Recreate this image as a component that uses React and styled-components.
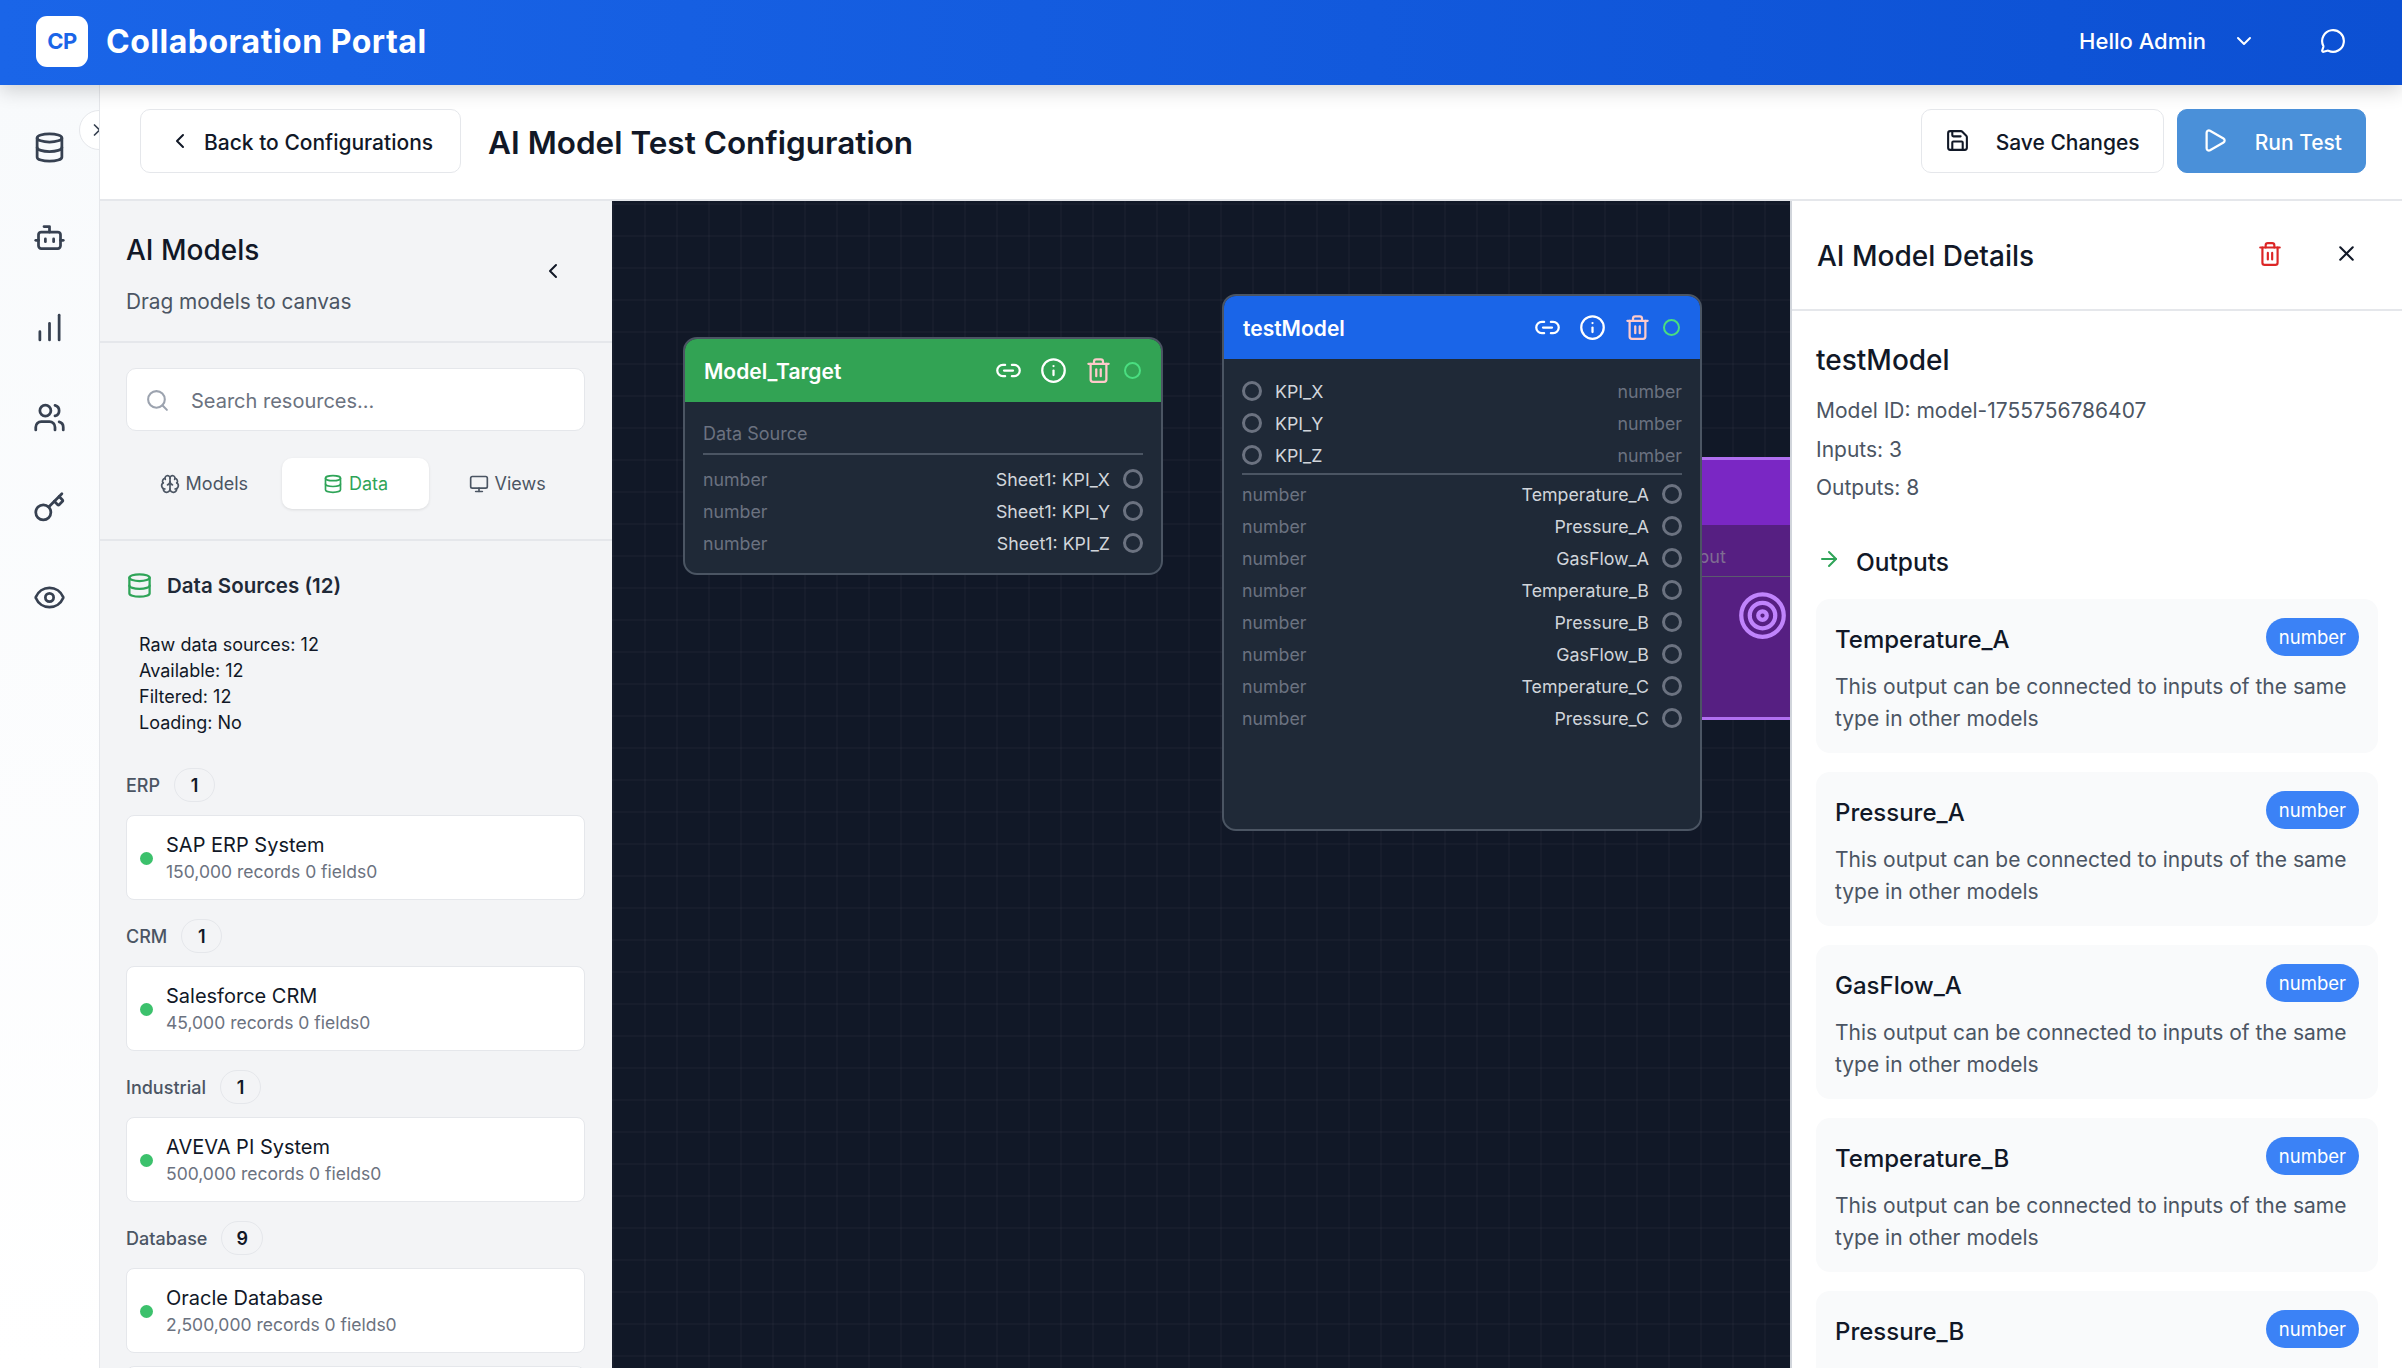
import styled, { createGlobalStyle } from 'styled-components';
import {
    ArrowRight, Bot, ChartNoAxesColumnIncreasing, ChevronDown, ChevronLeft, ChevronRight,
    Brain, Database, Eye, Info, Key, Link2, MessageCircle, Monitor, Play, Save, Search,
    Target, Trash2, Users, X,
} from 'lucide-react';

const GlobalStyle = createGlobalStyle`
    html, body { margin: 0; padding: 0; height: 100%; }
    body { font-family: Inter, "Noto Sans", sans-serif; color: #111827; overflow: hidden; background: #fff; }
    * { box-sizing: border-box; }
`;

const Page = styled.div`
    width: 2402px;
    height: 1368px;
    display: flex;
    flex-direction: column;
    overflow: hidden;
`;

const Header = styled.header`
    height: 85px;
    flex: none;
    display: flex;
    align-items: center;
    padding: 0 56px 3px 36px;
    background: linear-gradient(90deg, #1a65e8 0%, #0c50d3 100%);
    box-shadow: 0 6px 18px rgba(0, 0, 0, 0.16);
    position: relative;
    z-index: 5;
    color: #fff;
`;

const Logo = styled.div`
    width: 52px;
    height: 51px;
    border-radius: 11px;
    background: #fff;
    color: #1a65e8;
    font-size: 22px;
    font-weight: 700;
    display: flex;
    align-items: center;
    justify-content: center;
    letter-spacing: -0.5px;
`;

const Brand = styled.div`
    margin-left: 18px;
    font-size: 32px;
    font-weight: 700;
    letter-spacing: 0.5px;
    flex: 1;
`;

const UserName = styled.span`
    font-size: 22px;
    font-weight: 500;
`;

const HeaderIcon = styled.span`
    display: flex;
    margin-left: ${p => p.$gap}px;
`;

const Body = styled.div`
    flex: 1;
    min-height: 0;
    display: flex;
`;

const Rail = styled.nav`
    width: 100px;
    flex: none;
    position: relative;
    overflow: hidden;
    background: linear-gradient(180deg, #f8fafc 0%, #ffffff 100%);
    border-right: 1px solid #e5e7eb;
    display: flex;
    flex-direction: column;
    align-items: center;
    padding: 46px 0 0 0;
    gap: 57px;
    color: #374151;
`;

const RailToggle = styled.div`
    position: absolute;
    left: 79px;
    top: 25px;
    width: 40px;
    height: 40px;
    border-radius: 50%;
    background: #fff;
    border: 1px solid #e5e7eb;
    display: flex;
    align-items: center;
    padding-left: 7px;
    color: #374151;
`;

const Main = styled.div`
    flex: 1;
    min-width: 0;
    display: flex;
    flex-direction: column;
`;

const TopBar = styled.div`
    height: 116px;
    flex: none;
    background: #fff;
    border-bottom: 2px solid #e5e7eb;
    display: flex;
    align-items: center;
    padding: 0 36px 3px 40px;
`;

const Button = styled.button`
    height: 64px;
    border-radius: 10px;
    border: 1px solid ${p => (p.$primary ? '#4a90d9' : '#e5e7eb')};
    background: ${p => (p.$primary ? '#4a90d9' : '#fff')};
    color: ${p => (p.$primary ? '#fff' : '#111827')};
    font-family: inherit;
    font-size: 21px;
    font-weight: 500;
    display: flex;
    align-items: center;
    gap: ${p => p.$gap}px;
    padding: 0 ${p => p.$pad}px;
    margin-left: ${p => p.$left || 0}px;
`;

const ButtonLabel = styled.span`
    margin-top: 3px;
`;

const PageTitle = styled.h1`
    margin: 3px 0 0 27px;
    font-size: 31.5px;
    font-weight: 600;
    flex: 1;
`;

const Work = styled.div`
    flex: 1;
    min-height: 0;
    display: flex;
`;

const ModelsPanel = styled.aside`
    width: 512px;
    flex: none;
    background: #f3f4f6;
    display: flex;
    flex-direction: column;
    overflow: hidden;
`;

const PanelHead = styled.div`
    height: 142px;
    flex: none;
    border-bottom: 2px solid #e5e7eb;
    padding: 30px 27px 0 26px;
    display: flex;
    justify-content: space-between;
`;

const PanelTitle = styled.h2`
    margin: 0;
    font-size: 28px;
    line-height: 38px;
    font-weight: 500;
`;

const PanelSub = styled.p`
    margin: 19px 0 0;
    font-size: 20.8px;
    line-height: 28px;
    color: #4b5563;
`;

const Collapse = styled.span`
    display: flex;
    align-items: center;
    height: 80px;
    margin-right: 20px;
    color: #111827;
`;

const SearchArea = styled.div`
    height: 198px;
    flex: none;
    border-bottom: 2px solid #e5e7eb;
    padding: 25px 27px 0 26px;
`;

const SearchBox = styled.div`
    height: 63px;
    background: #fff;
    border: 1px solid #e5e7eb;
    border-radius: 10px;
    display: flex;
    align-items: center;
    gap: 21px;
    padding: 2px 0 0 18px;
    font-size: 20px;
    color: #6b7280;
`;

const Tabs = styled.div`
    display: grid;
    grid-template-columns: repeat(3, 1fr);
    gap: 4px;
    margin-top: 27px;
    padding: 0 4px;
`;

const Tab = styled.div`
    height: 51px;
    border-radius: 10px;
    display: flex;
    align-items: center;
    justify-content: center;
    gap: 6px;
    font-size: 18px;
    color: ${p => (p.$active ? '#2fa458' : '#4b5563')};
    background: ${p => (p.$active ? '#fff' : 'transparent')};
    box-shadow: ${p => (p.$active ? '0 1px 3px rgba(0, 0, 0, 0.1)' : 'none')};
`;

const Resources = styled.div`
    padding: 30px 27px 0 26px;
`;

const SourcesHead = styled.div`
    display: flex;
    align-items: center;
    gap: 14px;
    height: 28px;
    color: #2fa458;
`;

const SourcesTitle = styled.h3`
    margin: 0;
    font-size: 20.5px;
    font-weight: 600;
    color: #1f2937;
`;

const Debug = styled.div`
    margin: 33px 0 0 13px;
    font-size: 18px;
    line-height: 26px;
    color: #111827;
`;

const Group = styled.div`
    display: flex;
    align-items: center;
    gap: 14px;
    height: 34px;
    margin-top: ${p => (p.$first ? 32 : 19)}px;
    font-size: 18px;
    font-weight: 500;
    color: #4b5563;
`;

const Count = styled.span`
    min-width: 41px;
    padding: 0 14px;
    height: 34px;
    border-radius: 17px;
    border: 1px solid #e5e7eb;
    display: flex;
    align-items: center;
    justify-content: center;
    font-weight: 600;
    color: #111827;
`;

const SourceCard = styled.div`
    height: 85px;
    margin-top: 13px;
    background: #fff;
    border: 1px solid #e5e7eb;
    border-radius: 8px;
    display: flex;
    align-items: center;
    padding-left: 13px;
    gap: 13px;
`;

const Dot = styled.span`
    width: 13px;
    height: 13px;
    border-radius: 50%;
    background: #3cc16c;
    margin-top: 2px;
`;

const SourceName = styled.div`
    font-size: 20px;
    line-height: 28px;
    color: #111827;
`;

const SourceMeta = styled.div`
    font-size: 17.5px;
    line-height: 26px;
    color: #6b7280;
`;

const Canvas = styled.main`
    flex: 1;
    min-width: 0;
    position: relative;
    overflow: hidden;
    background-color: #111827;
    background-image:
        linear-gradient(rgba(255, 255, 255, 0.025) 2px, transparent 2px),
        linear-gradient(90deg, rgba(255, 255, 255, 0.025) 2px, transparent 2px);
    background-size: 32px 32px;
    background-position: 0 2px;
`;

const Node = styled.section`
    position: absolute;
    left: ${p => p.$x}px;
    top: ${p => p.$y}px;
    width: 480px;
    height: ${p => p.$h}px;
    background: #1f2937;
    border: 2px solid #4b5563;
    border-radius: 14px;
    overflow: hidden;
`;

const NodeHead = styled.div`
    height: 63px;
    background: ${p => p.$color};
    display: flex;
    align-items: center;
    padding: 0 20px 0 19px;
    color: #fff;
`;

const NodeTitle = styled.div`
    flex: 1;
    font-size: 21px;
    font-weight: 600;
    margin-top: 2px;
`;

const NodeIcon = styled.span`
    display: flex;
    justify-content: center;
    width: 30px;
    margin-right: 15px;
    color: ${p => p.$color || '#fff'};
`;

const Status = styled.span`
    width: 17px;
    height: 17px;
    margin-left: -4px;
    border-radius: 50%;
    border: 2px solid #4ade80;
`;

const NodeBody = styled.div`
    padding: ${p => p.$top}px 18px 0;
`;

const NodeCaption = styled.div`
    font-size: 18px;
    line-height: 24px;
    color: #6b7280;
    padding-bottom: 7px;
    border-bottom: 2px solid #4b5563;
    margin-bottom: 8px;
`;

const Port = styled.span`
    width: 20px;
    height: 20px;
    flex: none;
    border-radius: 50%;
    border: 3px solid #6b7280;
`;

const PortRow = styled.div`
    height: 32px;
    display: flex;
    align-items: center;
    font-size: 17.8px;
`;

const PortName = styled.span`
    color: #d1d5db;
    margin: ${p => (p.$right ? '0 13px 0 0' : '0 0 0 13px')};
`;

const PortType = styled.span`
    flex: 1;
    color: #6b7280;
    text-align: ${p => (p.$right ? 'right' : 'left')};
`;

const Divider = styled.div`
    height: 2px;
    background: #4b5563;
    margin: 2px 0 3px;
`;

const PurpleNode = styled.section`
    position: absolute;
    left: 1030px;
    top: 256px;
    width: 400px;
    height: 263px;
    background: #561f82;
    border: 3px solid #b06ff0;
    border-radius: 14px;
    overflow: hidden;
`;

const PurpleHead = styled.div`
    height: 65px;
    background: #7a27c4;
`;

const PurpleCaption = styled.div`
    height: 52px;
    border-bottom: 1px solid #5b5a6e;
    padding: 21px 0 0 23px;
    font-size: 18px;
    line-height: 22px;
    color: #7f6d92;
`;

const PurpleIcon = styled.div`
    position: absolute;
    left: 92px;
    top: 130px;
    color: #c084fc;
    display: flex;
`;

const DetailsPanel = styled.aside`
    width: 612px;
    flex: none;
    background: #fff;
    border-left: 2px solid #d1d5db;
    overflow: hidden;
`;

const DetailsHead = styled.div`
    height: 110px;
    border-bottom: 2px solid #e5e7eb;
    display: flex;
    align-items: center;
    padding: 0 43px 0 25px;
`;

const DetailsTitle = styled.h2`
    margin: 2px 0 0;
    flex: 1;
    font-size: 28px;
    font-weight: 500;
`;

const DetailsIcon = styled.span`
    display: flex;
    margin-left: ${p => p.$left || 0}px;
    color: ${p => p.$color};
    margin-top: -3px;
`;

const DetailsBody = styled.div`
    padding: 30px 24px 0;
`;

const ModelName = styled.h3`
    margin: 0;
    font-size: 28px;
    line-height: 38px;
    font-weight: 500;
`;

const Fact = styled.p`
    margin: 0;
    font-size: 21px;
    line-height: 38.5px;
    color: #4b5563;
    &:first-of-type { margin-top: 13px; }
`;

const OutputsHead = styled.div`
    display: flex;
    align-items: center;
    gap: 15px;
    margin: 37px 0 22px;
    height: 32px;
    padding-left: 1px;
    color: #2fa458;
`;

const OutputsArrow = styled.span`
    display: flex;
    margin-top: -3px;
`;

const OutputsTitle = styled.h4`
    margin: 2px 0 0;
    font-size: 24.5px;
    font-weight: 500;
    color: #111827;
`;

const OutputCard = styled.div`
    height: 154px;
    margin-bottom: 19px;
    background: #f9fafb;
    border-radius: 14px;
    padding: 19px 19px 0;
`;

const OutputTop = styled.div`
    display: flex;
    justify-content: space-between;
`;

const OutputName = styled.div`
    font-size: 24px;
    line-height: 42px;
    font-weight: 500;
    margin-top: 1px;
`;

const Badge = styled.span`
    height: 38px;
    padding: 0 13px;
    border-radius: 19px;
    background: #3b82f6;
    color: #fff;
    font-size: 18.5px;
    display: flex;
    align-items: center;
`;

const OutputText = styled.p`
    margin: 10px 0 0;
    font-size: 21px;
    line-height: 32px;
    color: #4b5563;
`;

const RAIL = [Database, Bot, ChartNoAxesColumnIncreasing, Users, Key, Eye];

const SOURCES = [
    { group: 'ERP', count: 1, name: 'SAP ERP System', records: '150,000' },
    { group: 'CRM', count: 1, name: 'Salesforce CRM', records: '45,000' },
    { group: 'Industrial', count: 1, name: 'AVEVA PI System', records: '500,000' },
    { group: 'Database', count: 9, name: 'Oracle Database', records: '2,500,000' },
];

const INPUTS = ['KPI_X', 'KPI_Y', 'KPI_Z'];
const OUTPUTS = ['Temperature_A', 'Pressure_A', 'GasFlow_A', 'Temperature_B', 'Pressure_B', 'GasFlow_B', 'Temperature_C', 'Pressure_C'];

function NodeHeader({ title, color }) {
    return (
        <NodeHead $color={color}>
            <NodeTitle>{title}</NodeTitle>
            <NodeIcon><Link2 size={27} strokeWidth={2} /></NodeIcon>
            <NodeIcon><Info size={27} strokeWidth={2} /></NodeIcon>
            <NodeIcon $color="#fecaca"><Trash2 size={27} strokeWidth={2} /></NodeIcon>
            <Status />
        </NodeHead>
    );
}

function OutputPort({ name }) {
    return (
        <PortRow>
            <PortType>number</PortType>
            <PortName $right>{name}</PortName>
            <Port />
        </PortRow>
    );
}

function App() {
    return (
        <Page>
            <GlobalStyle />
            <Header>
                <Logo>CP</Logo>
                <Brand>Collaboration Portal</Brand>
                <UserName>Hello Admin</UserName>
                <HeaderIcon $gap={26}><ChevronDown size={24} /></HeaderIcon>
                <HeaderIcon $gap={64}><MessageCircle size={26} /></HeaderIcon>
            </Header>
            <Body>
                <Rail>
                    <RailToggle><ChevronRight size={20} /></RailToggle>
                    {RAIL.map((Icon, index) => <Icon key={index} size={33} strokeWidth={2} />)}
                </Rail>
                <Main>
                    <TopBar>
                        <Button $gap={12} $pad={27}><ChevronLeft size={24} /><ButtonLabel>Back to Configurations</ButtonLabel></Button>
                        <PageTitle>AI Model Test Configuration</PageTitle>
                        <Button $gap={26} $pad={23}><Save size={25} /><ButtonLabel>Save Changes</ButtonLabel></Button>
                        <Button $primary $gap={27} $pad={23} $left={13}><Play size={27} /><ButtonLabel>Run Test</ButtonLabel></Button>
                    </TopBar>
                    <Work>
                        <ModelsPanel>
                            <PanelHead>
                                <div>
                                    <PanelTitle>AI Models</PanelTitle>
                                    <PanelSub>Drag models to canvas</PanelSub>
                                </div>
                                <Collapse><ChevronLeft size={24} /></Collapse>
                            </PanelHead>
                            <SearchArea>
                                <SearchBox><Search size={25} color="#9ca3af" />Search resources...</SearchBox>
                                <Tabs>
                                    <Tab><Brain size={20} />Models</Tab>
                                    <Tab $active><Database size={20} />Data</Tab>
                                    <Tab><Monitor size={20} />Views</Tab>
                                </Tabs>
                            </SearchArea>
                            <Resources>
                                <SourcesHead>
                                    <Database size={27} />
                                    <SourcesTitle>Data Sources (12)</SourcesTitle>
                                </SourcesHead>
                                <Debug>
                                    <div>Raw data sources: 12</div>
                                    <div>Available: 12</div>
                                    <div>Filtered: 12</div>
                                    <div>Loading: No</div>
                                </Debug>
                                {SOURCES.map((source, index) => (
                                    <div key={source.name}>
                                        <Group $first={index === 0}>
                                            {source.group}
                                            <Count>{source.count}</Count>
                                        </Group>
                                        <SourceCard>
                                            <Dot />
                                            <div>
                                                <SourceName>{source.name}</SourceName>
                                                <SourceMeta>{source.records} records 0 fields0</SourceMeta>
                                            </div>
                                        </SourceCard>
                                    </div>
                                ))}
                                <SourceCard />
                            </Resources>
                        </ModelsPanel>
                        <Canvas>
                            <PurpleNode>
                                <PurpleHead />
                                <PurpleCaption>Output</PurpleCaption>
                                <PurpleIcon><Target size={51} strokeWidth={2} /></PurpleIcon>
                            </PurpleNode>
                            <Node $x={71} $y={136} $h={238}>
                                <NodeHeader title="Model_Target" color="#32a354" />
                                <NodeBody $top={20}>
                                    <NodeCaption>Data Source</NodeCaption>
                                    {INPUTS.map(kpi => <OutputPort key={kpi} name={`Sheet1: ${kpi}`} />)}
                                </NodeBody>
                            </Node>
                            <Node $x={610} $y={93} $h={537}>
                                <NodeHeader title="testModel" color="#1a65e8" />
                                <NodeBody $top={16}>
                                    {INPUTS.map(name => (
                                        <PortRow key={name}>
                                            <Port />
                                            <PortName>{name}</PortName>
                                            <PortType $right>number</PortType>
                                        </PortRow>
                                    ))}
                                    <Divider />
                                    {OUTPUTS.map(name => <OutputPort key={name} name={name} />)}
                                </NodeBody>
                            </Node>
                        </Canvas>
                        <DetailsPanel>
                            <DetailsHead>
                                <DetailsTitle>AI Model Details</DetailsTitle>
                                <DetailsIcon $color="#dc2626"><Trash2 size={26} /></DetailsIcon>
                                <DetailsIcon $color="#111827" $left={51}><X size={25} /></DetailsIcon>
                            </DetailsHead>
                            <DetailsBody>
                                <ModelName>testModel</ModelName>
                                <Fact>Model ID: model-1755756786407</Fact>
                                <Fact>Inputs: 3</Fact>
                                <Fact>Outputs: 8</Fact>
                                <OutputsHead>
                                    <OutputsArrow><ArrowRight size={24} /></OutputsArrow>
                                    <OutputsTitle>Outputs</OutputsTitle>
                                </OutputsHead>
                                {OUTPUTS.slice(0, 5).map((name, index) => (
                                    <OutputCard key={name}>
                                        <OutputTop>
                                            <OutputName>{name}</OutputName>
                                            <Badge>number</Badge>
                                        </OutputTop>
                                        {index < 4 && <OutputText>This output can be connected to inputs of the same type in other models</OutputText>}
                                    </OutputCard>
                                ))}
                            </DetailsBody>
                        </DetailsPanel>
                    </Work>
                </Main>
            </Body>
        </Page>
    );
}

export default App;
